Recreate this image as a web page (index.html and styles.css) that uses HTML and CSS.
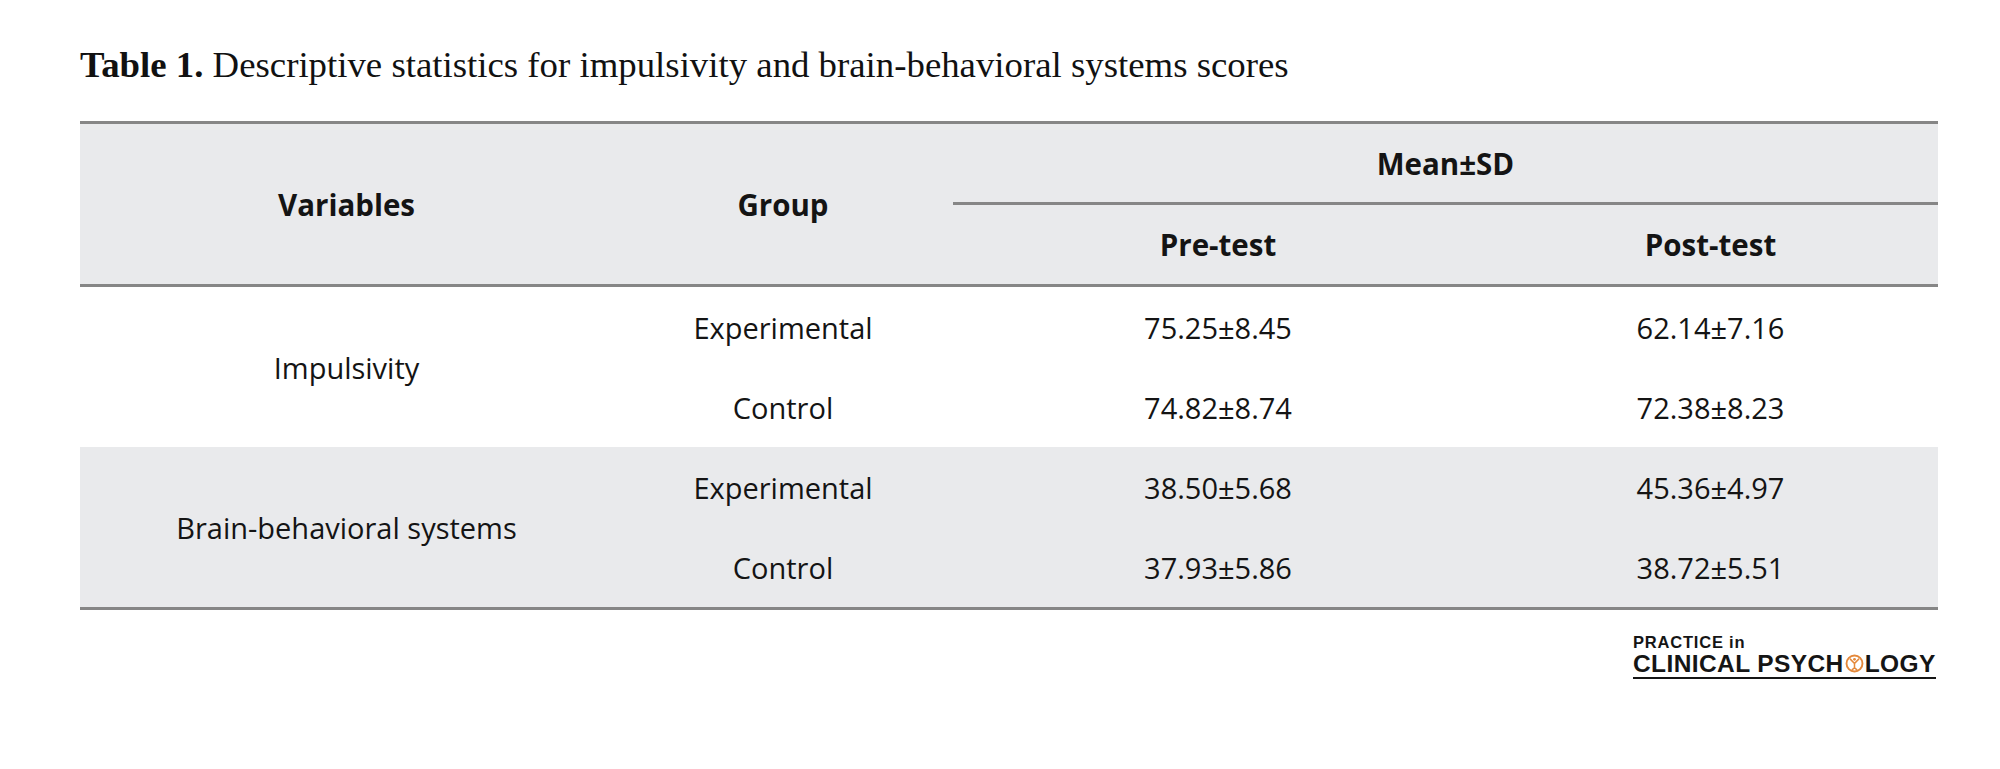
FILE: index.html
```html
<!DOCTYPE html>
<html lang="en">
<head>
<meta charset="utf-8">
<title>Table 1</title>
<link rel="stylesheet" href="styles.css">
</head>
<body>
<div class="page">
  <p class="caption"><b>Table 1.</b> Descriptive statistics for impulsivity and brain-behavioral systems scores</p>
  <table class="stats">
    <colgroup>
      <col class="c1"><col class="c2"><col class="c3"><col class="c4">
    </colgroup>
    <thead>
      <tr class="h1">
        <th rowspan="2">Variables</th>
        <th rowspan="2">Group</th>
        <th colspan="2" class="span">Mean±SD</th>
      </tr>
      <tr class="h2">
        <th>Pre-test</th>
        <th>Post-test</th>
      </tr>
    </thead>
    <tbody>
      <tr>
        <td rowspan="2">Impulsivity</td>
        <td>Experimental</td><td>75.25±8.45</td><td>62.14±7.16</td>
      </tr>
      <tr>
        <td>Control</td><td>74.82±8.74</td><td>72.38±8.23</td>
      </tr>
      <tr class="shade">
        <td rowspan="2">Brain-behavioral systems</td>
        <td>Experimental</td><td>38.50±5.68</td><td>45.36±4.97</td>
      </tr>
      <tr class="shade">
        <td>Control</td><td>37.93±5.86</td><td>38.72±5.51</td>
      </tr>
    </tbody>
  </table>
  <div class="logo-row">
    <div class="logo">
      <div class="logo-top">PRACTICE in</div>
      <div class="logo-main">CLINICAL PSYCH<svg class="logo-o" viewBox="0 0 20 20" width="19" height="19" aria-hidden="true"><circle cx="10" cy="10" r="8.4" fill="none" stroke="#e4883a" stroke-width="2"/><circle cx="10" cy="5.6" r="1.5" fill="#e4883a"/><path d="M5.6 5.4 L10 10 L14.4 5.4 M10 10 V14.6 M7.6 16.4 L10 14.6 L12.4 16.4" fill="none" stroke="#e4883a" stroke-width="1.6" stroke-linecap="round" stroke-linejoin="round"/></svg>LOGY</div>
    </div>
  </div>
</div>
</body>
</html>
```

FILE: styles.css
```css
html, body {
  margin: 0;
  padding: 0;
  background: #ffffff;
}

.page {
  padding: 0 62px 0 80px;
  width: 1858px;
}

.caption {
  margin: 45px 0 0 0;
  font-family: "Liberation Serif", "Times New Roman", serif;
  font-size: 36.8px;
  line-height: 40px;
  color: #111111;
  white-space: nowrap;
}

.caption b {
  font-weight: bold;
}

.stats {
  margin-top: 36px;
  width: 1858px;
  border-collapse: collapse;
  table-layout: fixed;
  font-family: "Open Sans", "Noto Sans", sans-serif;
  color: #141414;
}

.c1 { width: 533px; }
.c2 { width: 340px; }
.c3 { width: 530px; }
.c4 { width: 455px; }

.stats thead {
  background: #e9eaec;
}

.stats thead tr.h1 th {
  border-top: 3px solid #868686;
}

.stats thead tr.h2 th,
.stats thead tr.h1 th[rowspan] {
  border-bottom: 3px solid #868686;
}

.stats th {
  font-size: 29.5px;
  font-weight: 700;
  text-align: center;
  vertical-align: middle;
  padding: 0;
}

.stats .h1 th {
  height: 78px;
}

.stats .h2 th {
  height: 79px;
}

.stats th.span {
  border-bottom: 3px solid #868686;
}

.stats td {
  font-size: 29px;
  font-weight: 400;
  text-align: center;
  vertical-align: middle;
  height: 80px;
  padding: 0;
}

.stats tbody tr.shade td {
  background: #e9eaec;
}

.stats tbody tr:last-child td,
.stats tbody tr.shade td[rowspan] {
  border-bottom: 3px solid #868686;
}

.logo-row {
  display: flex;
  justify-content: flex-end;
  padding-right: 2px;
  margin-top: 23px;
}

.logo {
  display: flex;
  flex-direction: column;
  font-family: "Liberation Sans", Arial, sans-serif;
  font-weight: 700;
  color: #151515;
  border-bottom: 2px solid #151515;
  width: 303px;
}

.logo-top {
  font-size: 16.5px;
  line-height: 18px;
  letter-spacing: 0.8px;
}

.logo-main {
  font-size: 24.5px;
  line-height: 26px;
  letter-spacing: 0.4px;
  white-space: nowrap;
}

.logo-o {
  display: inline-block;
  vertical-align: -1px;
  margin: 0 1px;
}
```
